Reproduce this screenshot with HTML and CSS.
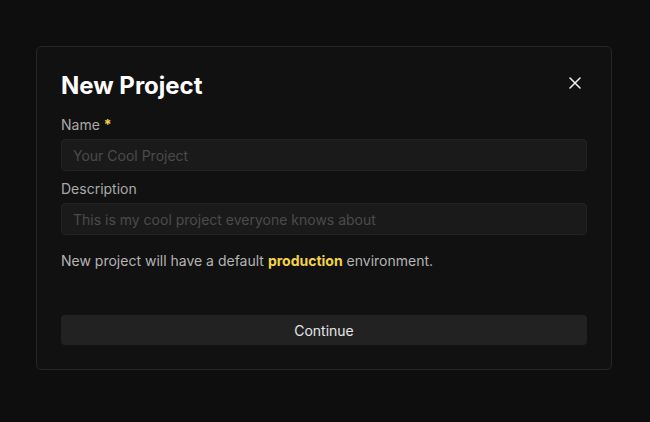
FILE: index.html
```html
<!DOCTYPE html>
<html lang="en">
<head>
<meta charset="utf-8">
<title>New Project</title>
<link rel="stylesheet" href="styles.css">
</head>
<body>
<div class="page">
  <div class="dialog">
    <div class="header">
      <h1 class="title">New Project</h1>
      <button class="close" aria-label="Close">
        <svg width="12" height="12" viewBox="0 0 12 12"><path d="M1 1L11 11M11 1L1 11" stroke="#f2f2f2" stroke-width="1.5" stroke-linecap="round"/></svg>
      </button>
    </div>
    <div class="field">
      <label class="label">Name <span class="req">*</span></label>
      <input class="input" placeholder="Your Cool Project">
    </div>
    <div class="field">
      <label class="label">Description</label>
      <input class="input" placeholder="This is my cool project everyone knows about">
    </div>
    <p class="note">New project will have a default <strong class="env">production</strong> environment.</p>
    <button class="continue">Continue</button>
  </div>
</div>
</body>
</html>
```

FILE: styles.css
```css
* { box-sizing: border-box; }
html, body { margin: 0; padding: 0; }
body {
  background: #0e0e0e;
  font-family: Inter, "Noto Sans", sans-serif;
  width: 650px;
  height: 422px;
}
.page {
  padding-top: 46px;
  padding-left: 36px;
}
.dialog {
  width: 576px;
  height: 324px;
  background: #111111;
  border: 1px solid #262626;
  border-radius: 5px;
  padding: 23px 24px 24px 24px;
  display: flex;
  flex-direction: column;
}
.header {
  display: flex;
  justify-content: space-between;
  align-items: flex-start;
  height: 32px;
  margin-bottom: 13px;
}
.title {
  margin: 0;
  font-size: 24px;
  line-height: 32px;
  font-weight: 700;
  color: #ffffff;
}
.close {
  background: none;
  border: 0;
  padding: 0;
  margin-top: 7px;
  margin-right: 6px;
  width: 12px;
  height: 12px;
  display: flex;
  cursor: pointer;
}
.field {
  display: flex;
  flex-direction: column;
  gap: 4px;
  margin-bottom: 8px;
}
.label {
  font-size: 14px;
  line-height: 20px;
  color: #a9a9a9;
}
.req { color: #f3d34a; font-weight: 700; }
.input {
  height: 32px;
  background: #1a1a1a;
  border: 1px solid #222222;
  border-radius: 4px;
  padding: 0 11px;
  font-family: inherit;
  font-size: 14px;
  color: #dddddd;
  outline: none;
}
.input::placeholder { color: #4b4b4b; }
.note {
  margin: 8px 0 0 0;
  font-size: 14px;
  line-height: 20px;
  color: #b4b4b4;
}
.env { color: #f3d34a; font-weight: 700; }
.continue {
  margin-top: auto;
  height: 30px;
  background: #222222;
  border: 0;
  border-radius: 4px;
  color: #e6e6e6;
  font-family: inherit;
  font-size: 14px;
  padding-bottom: 1px;
}
```
